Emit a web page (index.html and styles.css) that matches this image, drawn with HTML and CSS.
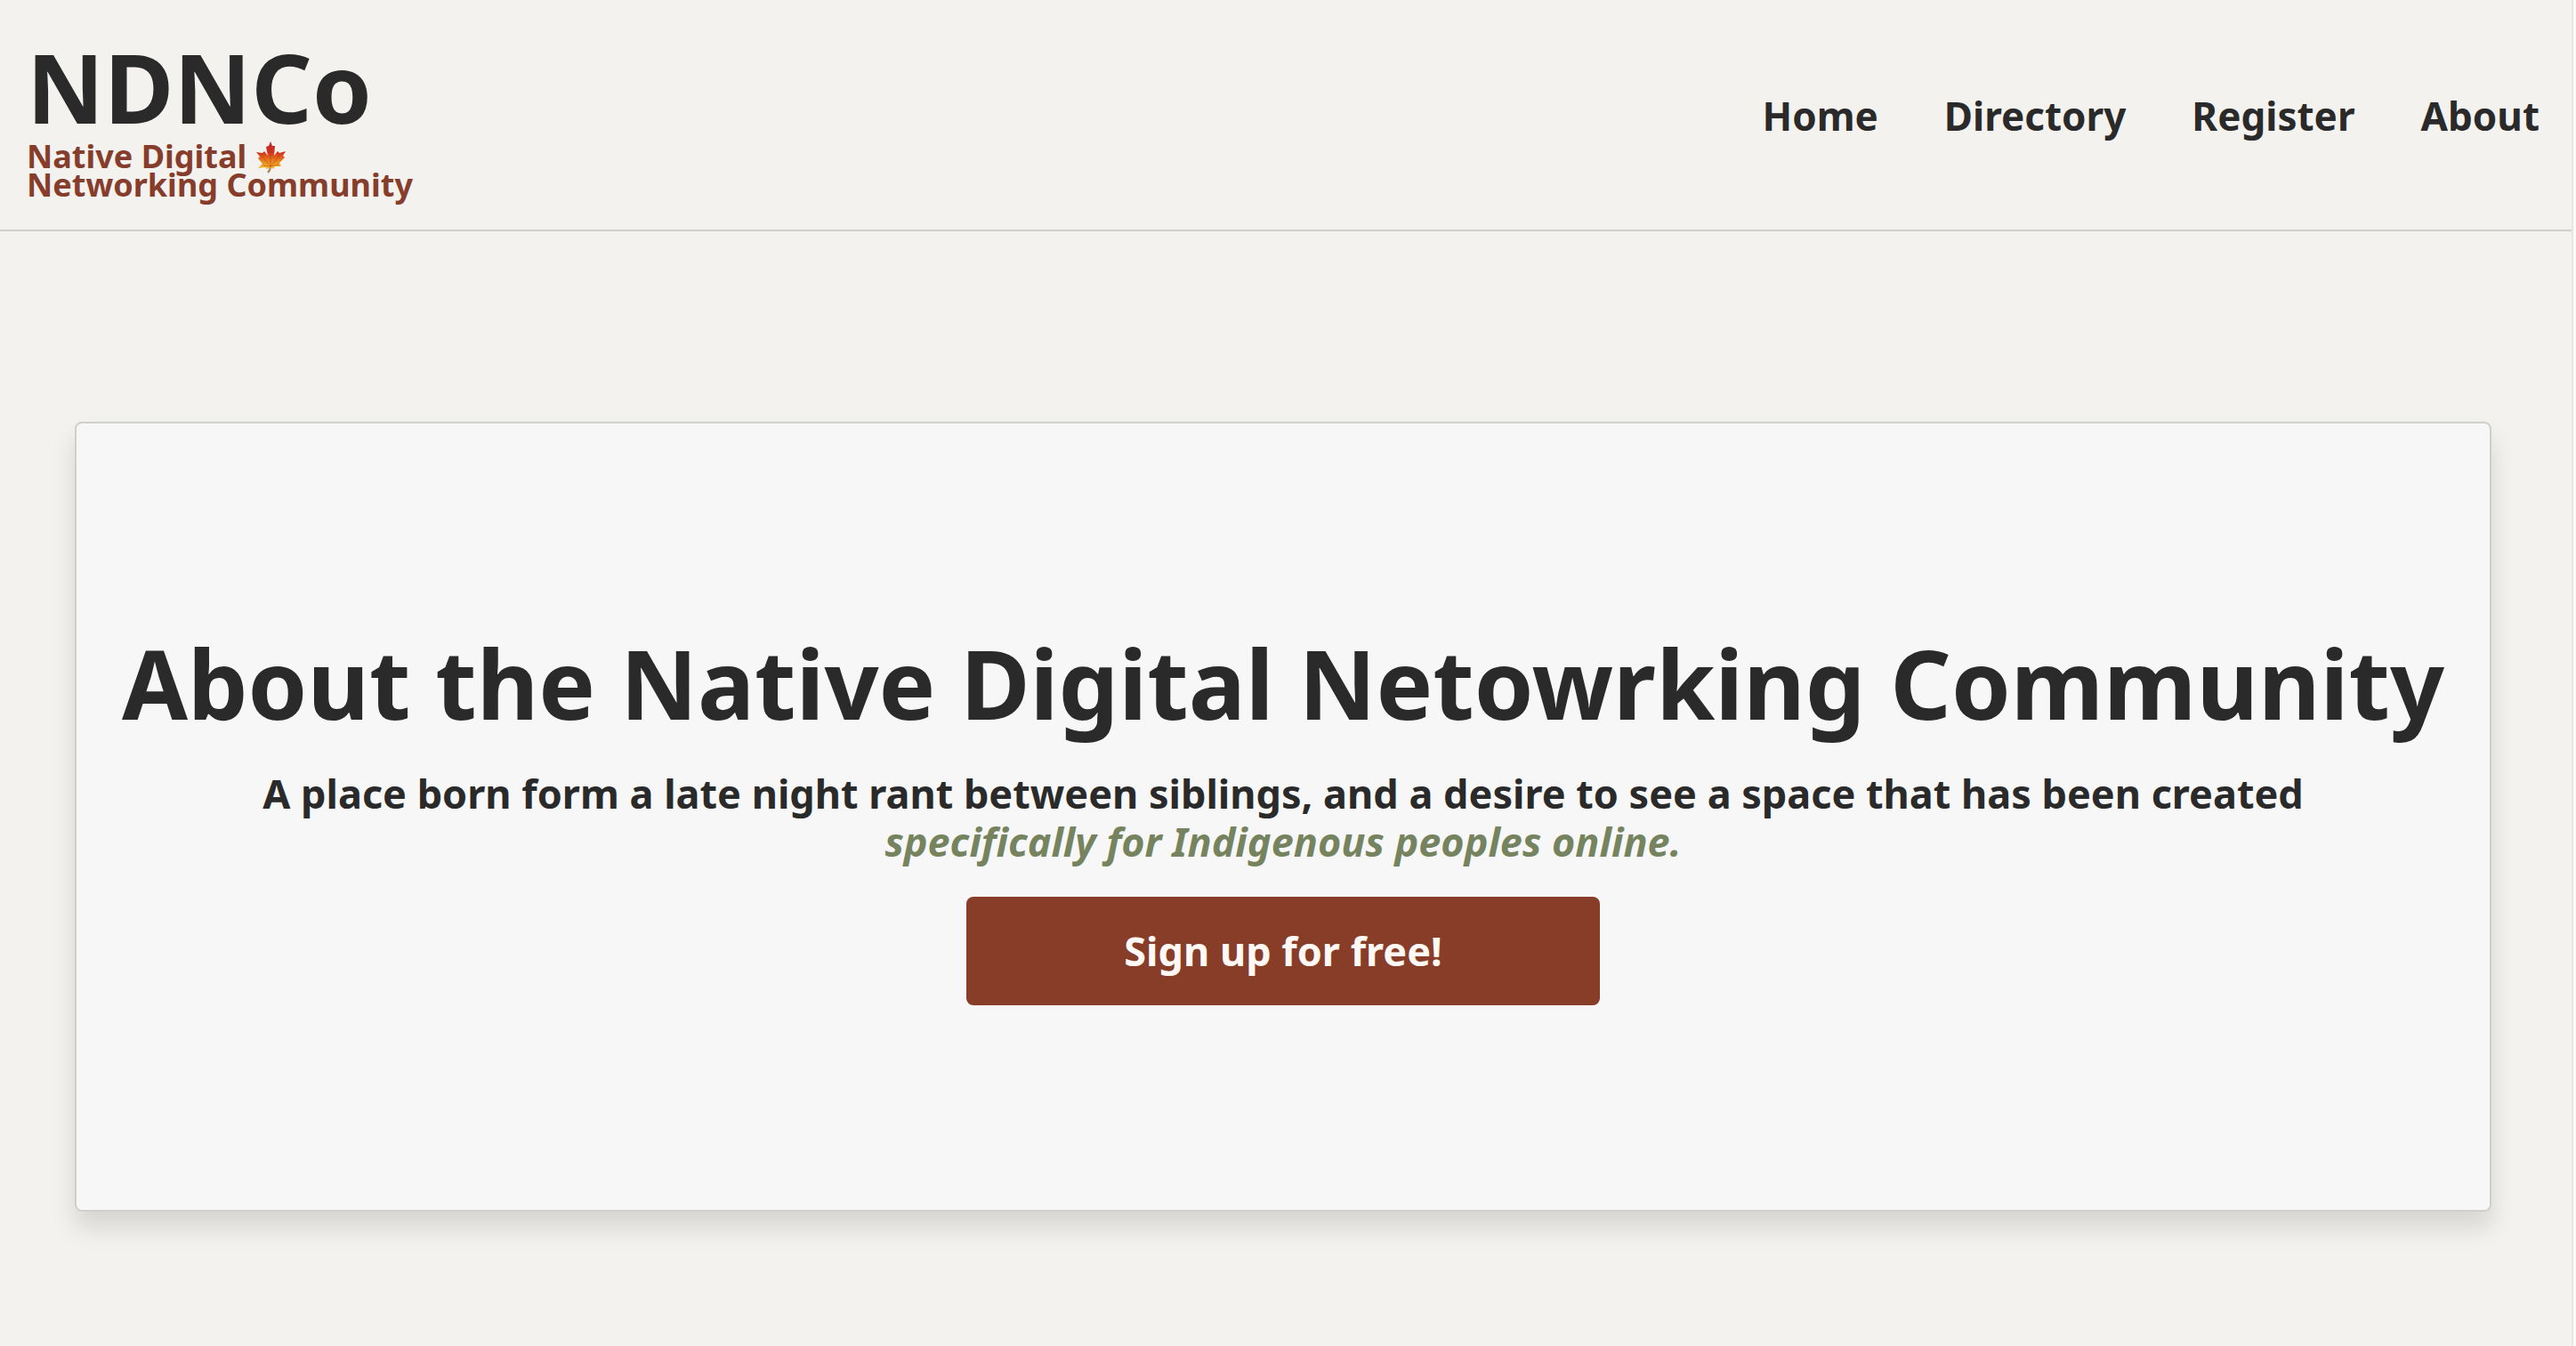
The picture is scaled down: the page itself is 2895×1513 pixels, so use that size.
FILE: index.html
```html
<!DOCTYPE html>
<html lang="en">
<head>
<meta charset="utf-8">
<meta name="viewport" content="width=device-width, initial-scale=1">
<title>NDNCo | About</title>
<link rel="stylesheet" href="styles.css">
</head>
<body>
<header class="site-header">
  <div class="brand">
    <a class="brand-name" href="#">NDNCo</a>
    <p class="tagline">Native Digital
      <svg class="leaf" viewBox="0 0 35 36" role="img" aria-label="Maple leaf">
        <defs>
          <linearGradient id="leaf-fill" x1="0" y1="0" x2="0" y2="1">
            <stop offset="0" stop-color="#c9202a"/>
            <stop offset=".4" stop-color="#d2331f"/>
            <stop offset=".7" stop-color="#e8801c"/>
            <stop offset="1" stop-color="#f8c02c"/>
          </linearGradient>
        </defs>
        <path d="M17 28 Q17 32 14 35" fill="none" stroke="#a5805a" stroke-width="2"/>
        <path d="M17 0 L19 5 L22 5 L21 16 L25 11 L27 13 L34 11 L31 16 L33 18 L27 24 L29 28 L22 28 L20 31 L17 29 L13 31 L11 29 L3 30 L8 25 L3 19 L5 17 L1 12 L8 13 L10 11 L14 16 L12 6 L15 5 Z" fill="url(#leaf-fill)"/>
        <path d="M17 29 L17 5 M17 28 L28 15 M17 28 L6 15 M17 28 L26 26 M17 28 L9 27" fill="none" stroke="#b5381c" stroke-opacity=".5"/>
      </svg>
      <br>Networking Community</p>
  </div>
  <nav class="site-nav" aria-label="Main">
    <a href="#">Home</a>
    <a href="#">Directory</a>
    <a href="#">Register</a>
    <a href="#">About</a>
  </nav>
</header>
<main class="page">
  <section class="hero">
    <h1>About the Native Digital Netowrking Community</h1>
    <p class="lead">A place born form a late night rant between siblings, and a desire to see a space that has been created <em>specifically for Indigenous peoples online.</em></p>
    <button class="signup" type="button">Sign up for free!</button>
  </section>
</main>
</body>
</html>
```

FILE: styles.css
```css
* {
  box-sizing: border-box;
}

html {
  background: #fbfbfa;
}

body {
  min-height: 100vh;
  margin: 0 3px 0 0;
  border-right: 2px solid #e6e6e3;
  background: #f3f2ee;
  color: #2a2a2a;
  font-family: "Noto Sans", sans-serif;
  font-size: 45px;
  font-weight: 700;
  line-height: 54px;
}

h1,
p {
  margin: 0;
}

a {
  color: inherit;
  text-decoration: none;
}

.site-header {
  display: flex;
  align-items: center;
  justify-content: space-between;
  padding: 36px 36px 34px 30px;
  border-bottom: 2px solid #cfcfcb;
}

.brand {
  display: flex;
  flex-direction: column;
}

.brand-name {
  font-size: 107px;
  line-height: 124px;
}

.tagline {
  color: #873d2c;
  font-size: 36px;
  line-height: 32px;
}

.leaf {
  width: 35px;
  height: 36px;
  margin: -6px 0;
}

.site-nav {
  display: flex;
  gap: 74px;
  font-size: 44px;
}

.page {
  padding: 214px 90px 150px 84px;
}

.hero {
  display: flex;
  flex-direction: column;
  align-items: center;
  gap: 35px;
  padding: 230px 36px;
  border: 2px solid #cfcfcb;
  border-radius: 8px;
  background: #f7f7f7;
  box-shadow: 0 18px 28px rgba(0, 0, 0, 0.12);
  text-align: center;
}

h1 {
  font-size: 107px;
  line-height: 124px;
}

.lead em {
  display: block;
  color: #76835f;
}

.signup {
  padding: 34px 177px;
  border: 0;
  border-radius: 8px;
  background: #873d28;
  color: #fff8f4;
  font: inherit;
}
```
